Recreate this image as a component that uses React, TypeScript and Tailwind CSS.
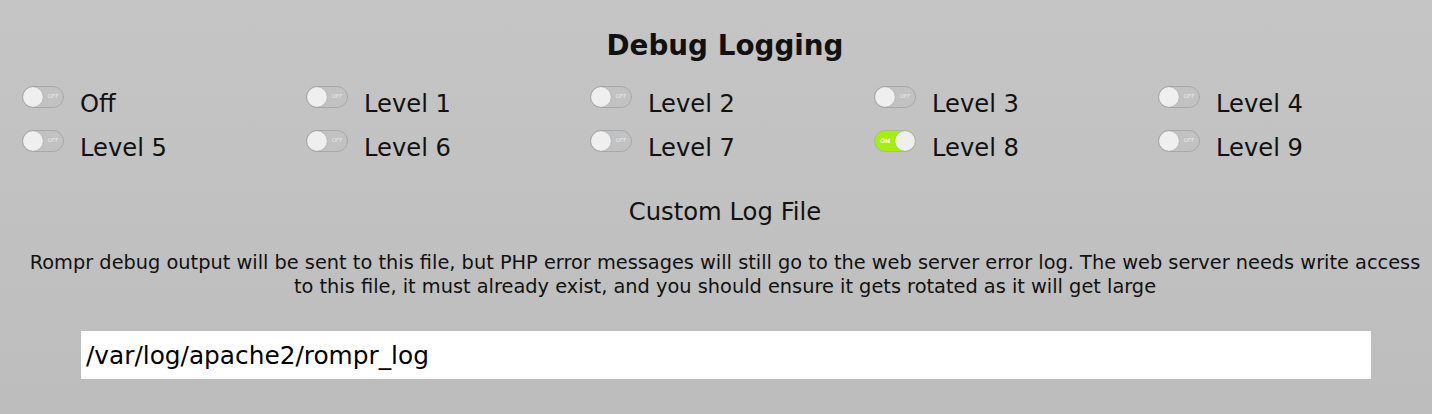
import React, { useState } from 'react';

const levels = ['Off', 'Level 1', 'Level 2', 'Level 3', 'Level 4', 'Level 5', 'Level 6', 'Level 7', 'Level 8', 'Level 9'];

const Toggle: React.FC<{ on: boolean }> = ({ on }) => (
  <div
    className={
      on
        ? 'flex h-[22px] w-[42px] shrink-0 flex-row-reverse items-center rounded-full border border-[#a9b99a] bg-[#a6ef0a]'
        : 'flex h-[22px] w-[42px] shrink-0 items-center rounded-full border border-[#a8a8a8] bg-[#c2c2c2]'
    }
  >
    <span className="h-[20px] w-[20px] shrink-0 rounded-full bg-[#efefef] shadow-[0_0_1px_#888]" />
    <span
      className={
        on
          ? 'flex-1 text-center text-[6px] leading-none font-bold text-white'
          : 'flex-1 text-center text-[5.5px] leading-none text-[#ececec]'
      }
    >
      {on ? 'ON' : 'OFF'}
    </span>
  </div>
);

const App: React.FC = () => {
  const [level, setLevel] = useState(8);
  const [logFile, setLogFile] = useState('/var/log/apache2/rompr_log');

  return (
    <div
      className="h-[414px] w-full overflow-hidden bg-gradient-to-b from-[#c5c5c5] to-[#bdbdbd] text-[#111]"
      style={{ fontFamily: '"DejaVu Sans", Verdana, sans-serif' }}
    >
      <h2 className="pl-[18px] pt-[30px] text-center text-[27.8px] font-bold leading-[32px]">Debug Logging</h2>

      <div className="mt-[24px] grid grid-cols-[repeat(5,284px)] gap-y-[15px] pl-[22px]">
        {levels.map((l, i) => (
          <div key={l} className="flex items-start gap-[16px] cursor-pointer" onClick={() => setLevel(i)}>
            <Toggle on={level === i} />
            <span className="pt-[7px] text-[24.2px] leading-[22px]">{l}</span>
          </div>
        ))}
      </div>

      <div className="mt-[38px] pl-[18px] text-center text-[24.3px] leading-[30px]">Custom Log File</div>

      <p className="mt-[24px] pl-[18px] text-center text-[19.35px] leading-[24px]">
        Rompr debug output will be sent to this file, but PHP error messages will still go to the web server error log. The web
        server needs write access to this file, it must already exist, and you should ensure it gets rotated as it will get large
      </p>

      <div className="mt-[32px] pl-[81px]">
        <input
          className="h-[48px] w-[1290px] bg-white px-[5px] text-[24.8px] text-black outline-none"
          value={logFile}
          onChange={(e) => setLogFile(e.target.value)}
        />
      </div>
    </div>
  );
};

export default App;
